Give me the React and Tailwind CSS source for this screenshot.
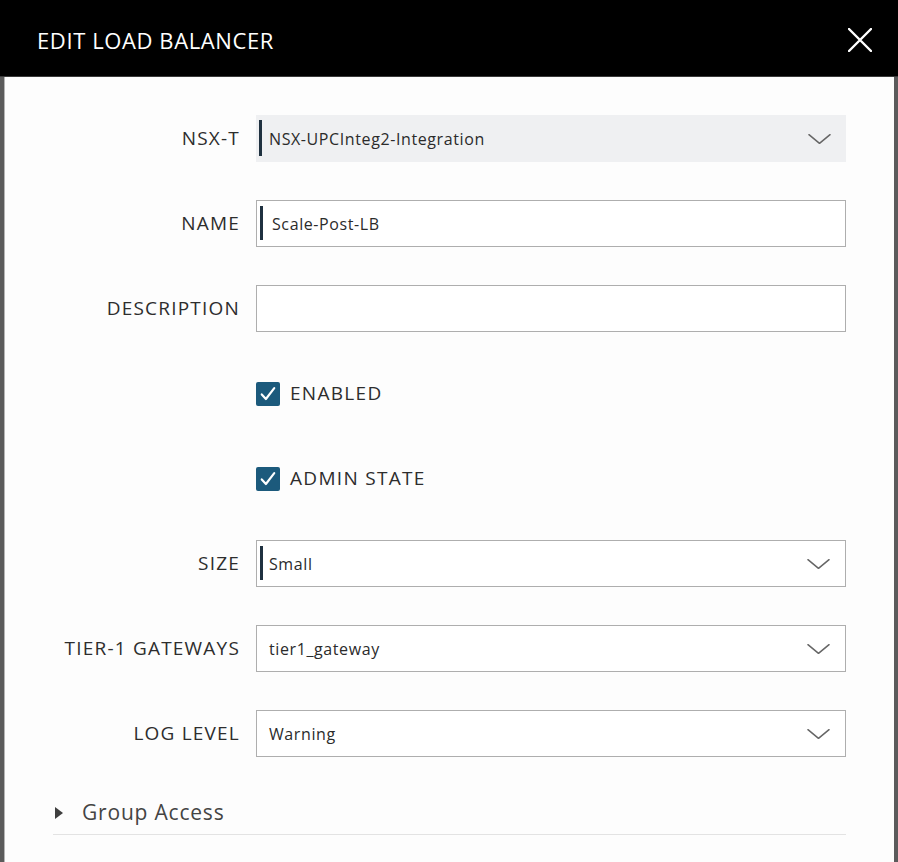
const FONT = "font-['Open_Sans','Liberation_Sans',sans-serif]";

function Caret() {
  return <span className="absolute left-[3px] top-[5px] bottom-[6px] w-[3px] bg-[#1f3140]" />;
}

function Chevron() {
  return (
    <svg viewBox="0 0 24 12" className="w-[23px] h-[12px]" fill="none" stroke="#666" strokeWidth="1.6" strokeLinecap="round" strokeLinejoin="round">
      <path d="M1 1.5L12 10.5L23 1.5" />
    </svg>
  );
}

function Field({ label, value, select, shaded, caret, boxCls = "" }) {
  return (
    <div className="flex items-center h-[47px]">
      <label className="w-[251px] pr-[16px] text-right text-[19px] tracking-[1.2px] text-[#2d2d2d]">{label}</label>
      <div
        className={`relative flex items-center w-[590px] h-full pl-[12px] pr-[15px] ${
          shaded ? "bg-[#eff0f2] pl-[13px]" : "bg-white border-[1.5px] border-[#aeaeae]"
        } ${boxCls}`}
      >
        {caret && <Caret />}
        <span className="flex-1 text-[16px] tracking-[0.6px] text-[#2b2b2b]">{value}</span>
        {select && <Chevron />}
      </div>
    </div>
  );
}

function Check({ label }) {
  return (
    <div className="flex items-center h-[47px] pl-[251px]">
      <span className="w-[24px] h-[24px] rounded-[2px] bg-[#1c5a7c] flex items-center justify-center">
        <svg viewBox="0 0 24 24" className="w-[20px] h-[20px]" fill="none" stroke="white" strokeWidth="2.6" strokeLinecap="round" strokeLinejoin="round">
          <path d="M4.5 12.5l5 5.5L19.5 5" />
        </svg>
      </span>
      <span className="ml-[10px] text-[19px] tracking-[1.3px] text-[#2d2d2d]">{label}</span>
    </div>
  );
}

export default function App() {
  return (
    <div className={`w-[898px] h-[862px] flex flex-col overflow-hidden bg-[#5b5b5b] ${FONT}`}>
      <div className="flex items-center justify-between h-[77px] pt-[4px] bg-black pl-[37px] pr-[26px] border-b border-[#3a3a3a]">
        <h1 className="text-[22px] text-white tracking-[0.6px]">EDIT LOAD BALANCER</h1>
        <svg viewBox="0 0 24 24" className="w-[24px] h-[24px]" fill="none" stroke="white" strokeWidth="2.4" strokeLinecap="round">
          <path d="M1 1L23 23M23 1L1 23" />
        </svg>
      </div>
      <div className="flex-1 flex">
        <div className="w-[5px] bg-[#5b5b5b] border-r border-[#b5b5b5]" />
        <div className="flex-1 bg-[#fdfdfd] pt-[38px] flex flex-col">
          <div className="flex flex-col gap-[38px]">
            <Field label="NSX-T" value="NSX-UPCInteg2-Integration" select shaded caret />
            <Field label="NAME" value="Scale-Post-LB" caret boxCls="pl-[15px]" />
            <Field label="DESCRIPTION" value="" />
            <Check label="ENABLED" />
            <Check label="ADMIN STATE" />
            <Field label="SIZE" value="Small" select caret />
            <Field label="TIER-1 GATEWAYS" value="tier1_gateway" select />
            <Field label="LOG LEVEL" value="Warning" select />
          </div>
          <div className="mt-[40px] ml-[48px] w-[793px] flex items-center gap-[19px] pl-[2px] pb-[5px] border-b border-[#e3e3e3]">
            <svg viewBox="0 0 8 12" className="w-[8px] h-[12px]">
              <path d="M0 0L8 6L0 12Z" fill="#3f3f3f" />
            </svg>
            <span className="text-[21px] tracking-[0.8px] text-[#444]">Group Access</span>
          </div>
        </div>
        <div className="w-[4px] bg-[#5b5b5b]" />
      </div>
    </div>
  );
}
